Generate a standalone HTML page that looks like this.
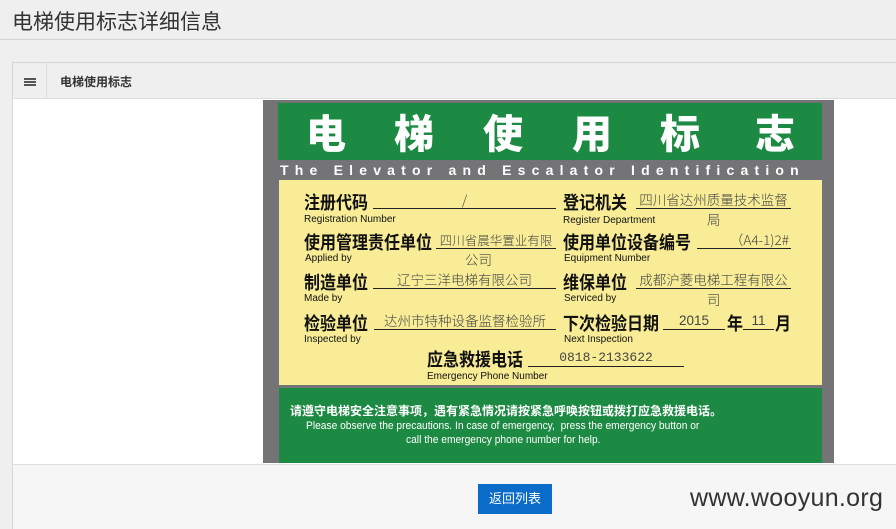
<!DOCTYPE html>
<html><head><meta charset="utf-8"><style>
*{margin:0;padding:0;box-sizing:border-box}
body{width:896px;height:529px;overflow:hidden;background:#efefef;font-family:"Liberation Sans","Noto Sans CJK SC",sans-serif;position:relative}
.a{position:absolute;white-space:nowrap}
.t{font-size:21px;color:#333;left:12px;top:6px}
.hr{left:0;top:39px;width:896px;height:1px;background:#d4d4d4}
.panel{left:12px;top:62px;width:884px;height:467px;border:1px solid #d6d6d6;border-right:none;border-bottom:none;background:#f6f6f6}
.ph{left:0;top:0;width:884px;height:36px;background:#efefef;border-bottom:1px solid #ddd}
.body{left:0;top:36px;width:884px;height:366px;background:#fff;border-bottom:1px solid #ddd}
.sign{left:263px;top:100px;width:571px;height:363px;background:#747476}
.g{background:#1d8a43}
.y{background:#f8ec96}
.lb{font-weight:bold;font-size:16px;color:#111;font-family:"Noto Sans CJK SC",sans-serif;line-height:18px;transform:scaleY(1.12);transform-origin:0 0}
.en{font-size:10px;color:#111;line-height:11px}
.v{font-size:13.5px;color:#444;line-height:15px;font-family:"Noto Sans CJK SC",sans-serif;border-bottom:1px solid #222;text-align:center;font-weight:300;height:17px}
.vs{font-size:13.5px;color:#444;line-height:15px;font-family:"Noto Sans CJK SC",sans-serif;font-weight:300}
.big{top:107px;color:#fff;font-size:40px;font-weight:900;font-family:'Noto Sans CJK SC',sans-serif;line-height:48px}
</style></head><body>
<div class="a t">电梯使用标志详细信息</div>
<div class="a hr"></div>
<div class="a panel">
 <div class="a ph">
  <div class="a" style="left:11px;top:15px;width:12px;height:2px;background:#555;box-shadow:0 3px 0 #555,0 6px 0 #555"></div>
  <div class="a" style="left:33px;top:0;width:1px;height:36px;background:#ddd"></div>
  <div class="a" style="left:47px;top:10px;font-size:12px;font-weight:bold;color:#333">电梯使用标志</div>
 </div>
 <div class="a body"></div>
 <div class="a" style="left:465px;top:421px;width:74px;height:30px;background:#0b6bc8;color:#fff;font-size:13px;text-align:center;line-height:30px">返回列表</div>
</div>
<div class="a sign"></div>
<div class="a g" style="left:278px;top:103px;width:544px;height:57px"></div>
<div class="a big" style="left:306px">电</div>
<div class="a big" style="left:394px">梯</div>
<div class="a big" style="left:483px">使</div>
<div class="a big" style="left:572px">用</div>
<div class="a big" style="left:660px">标</div>
<div class="a big" style="left:755px">志</div>
<div class="a" style="left:280px;top:163px;width:540px;color:#fff;font-size:14px;font-weight:bold;letter-spacing:6.2px;line-height:15px;font-family:'Liberation Sans',sans-serif">The Elevator and Escalator Identification</div>
<div class="a y" style="left:279px;top:180px;width:543px;height:205px"></div>
<div class="a g" style="left:279px;top:388px;width:543px;height:75px"></div>

<div class="a lb" style="left:304px;top:191px">注册代码</div>
<div class="a en" style="left:304px;top:214px">Registration Number</div>
<div class="a v" style="left:373px;top:192px;width:183px">/</div>
<div class="a lb" style="left:563px;top:191px">登记机关</div>
<div class="a en" style="left:563px;top:215px">Register Department</div>
<div class="a v" style="left:636px;top:192px;width:155px">四川省达州质量技术监督</div>
<div class="a vs" style="left:707px;top:212px">局</div>

<div class="a lb" style="left:304px;top:231px">使用管理责任单位</div>
<div class="a en" style="left:305px;top:253px">Applied by</div>
<div class="a v" style="left:436px;top:232px;width:120px;font-size:12.5px">四川省晨华置业有限</div>
<div class="a vs" style="left:465px;top:252px">公司</div>
<div class="a lb" style="left:563px;top:231px">使用单位设备编号</div>
<div class="a en" style="left:564px;top:253px">Equipment Number</div>
<div class="a v" style="left:697px;top:232px;width:94px;text-align:right;padding-right:2px">（A4-1)2#</div>

<div class="a lb" style="left:304px;top:271px">制造单位</div>
<div class="a en" style="left:304px;top:293px">Made by</div>
<div class="a v" style="left:373px;top:272px;width:183px">辽宁三洋电梯有限公司</div>
<div class="a lb" style="left:563px;top:271px">维保单位</div>
<div class="a en" style="left:564px;top:293px">Serviced by</div>
<div class="a v" style="left:636px;top:272px;width:155px">成都沪菱电梯工程有限公</div>
<div class="a vs" style="left:707px;top:292px">司</div>

<div class="a lb" style="left:304px;top:312px">检验单位</div>
<div class="a en" style="left:304px;top:334px">Inspected by</div>
<div class="a v" style="left:374px;top:313px;width:182px">达州市特种设备监督检验所</div>
<div class="a lb" style="left:563px;top:312px">下次检验日期</div>
<div class="a en" style="left:564px;top:334px">Next Inspection</div>
<div class="a v" style="left:663px;top:313px;width:62px;font-family:'Liberation Sans',sans-serif">2015</div>
<div class="a lb" style="left:727px;top:312px">年</div>
<div class="a v" style="left:743px;top:313px;width:31px;font-family:'Liberation Sans',sans-serif">11</div>
<div class="a lb" style="left:775px;top:312px">月</div>

<div class="a lb" style="left:427px;top:348px">应急救援电话</div>
<div class="a en" style="left:427px;top:371px">Emergency Phone Number</div>
<div class="a v" style="left:528px;top:350px;width:156px;font-family:'Liberation Mono',monospace;font-size:13px">0818-2133622</div>

<div class="a" style="left:290px;top:402px;color:#fff;font-size:12px;font-weight:bold;font-family:'Noto Sans CJK SC',sans-serif">请遵守电梯安全注意事项，遇有紧急情况请按紧急呼唤按钮或拨打应急救援电话。</div>
<div class="a" style="left:306px;top:419px;color:#fff;font-size:11px;line-height:14px;transform:scaleX(.93);transform-origin:0 0">Please observe the precautions. In case of emergency, &nbsp;press the emergency button or</div>
<div class="a" style="left:406px;top:433px;color:#fff;font-size:11px;line-height:14px;transform:scaleX(.93);transform-origin:0 0">call the emergency phone number for help.</div>

<div class="a" style="left:690px;top:484px;font-size:25px;color:#333;letter-spacing:.3px">www.wooyun.org</div>
</body></html>
